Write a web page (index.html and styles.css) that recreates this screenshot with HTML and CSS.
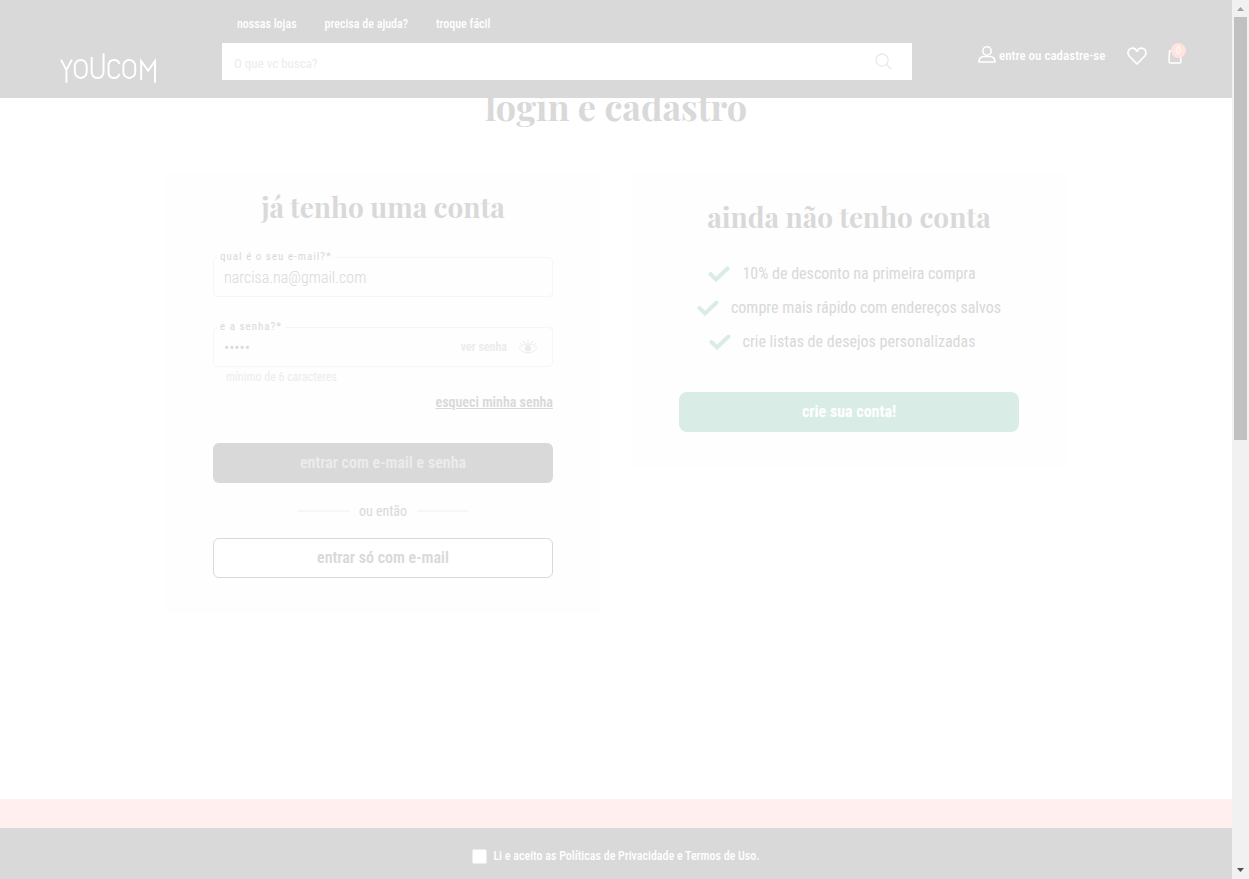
FILE: index.html
```html
<!DOCTYPE html>
<html lang="pt-BR">
<head>
<meta charset="utf-8">
<meta name="viewport" content="width=device-width, initial-scale=1">
<title>login e cadastro | Youcom</title>
<link rel="stylesheet" href="styles.css">
</head>
<body>
<div class="page">
  <header class="header">
    <a class="logo" href="#" aria-label="Youcom">
      <svg width="97" height="32" viewBox="0 0 98 32" fill="none" stroke="currentColor" stroke-width="2">
        <path d="M1 7.500 6.500 18 12 7.500M6.500 17V31"/>
        <rect x="15" y="8" width="12" height="18" rx="6"/>
        <path d="M32 5V19Q32 26 38 26Q44 26 44 19V1"/>
        <path d="M60 12Q59 8 54.500 8Q49 8 49 14V20Q49 26 54.500 26Q59 26 60 22"/>
        <rect x="64" y="8" width="12" height="18" rx="6"/>
        <path d="M82 28V9L89 18.500 96 9V31"/>
      </svg>
    </a>
    <div class="header-center">
      <nav class="top-links">
        <a href="#">nossas lojas</a>
        <a href="#">precisa de ajuda?</a>
        <a href="#">troque fácil</a>
      </nav>
      <form class="search">
        <input type="search" placeholder="O que vc busca?" aria-label="Buscar">
        <button type="submit" aria-label="Buscar">
          <svg width="17" height="17" viewBox="0 0 18 18" fill="none" stroke="currentColor" stroke-width="1.300"><circle cx="7.500" cy="7.500" r="6.500"/><path d="m12.200 12.200 4.800 4.800"/></svg>
        </button>
      </form>
    </div>
    <div class="actions">
      <a class="account" href="#">
        <svg width="18" height="17" viewBox="0 0 18 17" fill="none" stroke="currentColor" stroke-width="1.600"><circle cx="9" cy="5" r="4.200"/><path d="M1 16Q1 10.500 6 10.500H12Q17 10.500 17 16Z" stroke-linejoin="round"/></svg>
        <span>entre ou cadastre-se</span>
      </a>
      <a class="wish" href="#" aria-label="Favoritos">
        <svg width="20" height="18" viewBox="0 0 20 18" fill="none" stroke="currentColor" stroke-width="1.700" stroke-linejoin="round"><path d="M10 17 2.200 9C0 6.400 1 2.600 3.700 1.500 6.200.500 8.800 1.700 10 4.400 11.200 1.700 13.800.500 16.300 1.500 19 2.600 20 6.400 17.800 9Z"/></svg>
      </a>
      <a class="bag" href="#" aria-label="Sacola, 0 itens">
        <svg width="14" height="14" viewBox="0 0 14 14" fill="none" stroke="currentColor" stroke-width="1.500"><path d="M1.500 1H12L13 11.500Q13 13 11.500 13H2.500Q1 13 1 11.500Z"/></svg>
        <span class="badge">0</span>
      </a>
    </div>
  </header>

  <main class="main">
    <h1>login e cadastro</h1>
    <div class="cards">
      <form class="card login">
        <h2>já tenho uma conta</h2>
        <div class="field">
          <label for="email">qual é o seu e-mail?*</label>
          <input id="email" type="email" value="narcisa.na@gmail.com">
        </div>
        <div class="field">
          <label for="senha">e a senha?*</label>
          <input id="senha" type="password" value="senha">
          <button class="reveal" type="button">ver senha
            <svg width="20" height="14" viewBox="0 0 20 14" fill="none" stroke="currentColor"><path d="M.700 8.500Q5 3.500 10 3.500T19.300 8.500Q15 13 10 13T.700 8.500ZM10 3V0M6.500 3.500 5.500 1M13.500 3.500 14.500 1M3.700 5 2 3M16.300 5 18 3"/><circle cx="10" cy="8" r="3" fill="currentColor"/></svg>
          </button>
        </div>
        <p class="hint">mínimo de 6 caracteres</p>
        <a class="forgot" href="#">esqueci minha senha</a>
        <button class="btn btn-dark" type="submit">entrar com e-mail e senha</button>
        <div class="or"><span>ou então</span></div>
        <button class="btn btn-outline" type="button">entrar só com e-mail</button>
      </form>

      <section class="card signup">
        <h2>ainda não tenho conta</h2>
        <ul class="perks">
          <li><svg width="22" height="16" viewBox="0 0 22 16" fill="none" stroke="currentColor" stroke-width="4"><path d="M2.500 8 8 13.500 19.500 2.500" stroke-linecap="round"/></svg>10% de desconto na primeira compra</li>
          <li><svg width="22" height="16" viewBox="0 0 22 16" fill="none" stroke="currentColor" stroke-width="4"><path d="M2.500 8 8 13.500 19.500 2.500" stroke-linecap="round"/></svg>compre mais rápido com endereços salvos</li>
          <li><svg width="22" height="16" viewBox="0 0 22 16" fill="none" stroke="currentColor" stroke-width="4"><path d="M2.500 8 8 13.500 19.500 2.500" stroke-linecap="round"/></svg>crie listas de desejos personalizadas</li>
        </ul>
        <button class="btn btn-green" type="button">crie sua conta!</button>
      </section>
    </div>
  </main>

  <footer class="footer">
    <label><input type="checkbox">Li e aceito as Políticas de Privacidade e Termos de Uso.</label>
  </footer>
</div>
<div class="scrollbar" aria-hidden="true">
  <svg class="arrow-up" width="7" height="4" viewBox="0 0 7 4"><path d="M0 4 3.500 0 7 4Z" fill="currentColor"/></svg>
  <div class="track"><div class="thumb"></div></div>
  <svg width="7" height="4" viewBox="0 0 7 4"><path d="M0 0 3.500 4 7 0Z" fill="currentColor"/></svg>
</div>
</body>
</html>
```

FILE: styles.css
```css
* { box-sizing: border-box; }

body {
  margin: 0;
  min-height: 100vh;
  display: flex;
  background: #fff;
  color: #d9d9d9;
  font-family: "Roboto Condensed", "Liberation Sans Narrow", Roboto, sans-serif;
  font-size: 16px;
}

a { color: inherit; text-decoration: none; }
button, input { font: inherit; color: inherit; }
button { padding: 0; border: 0; background: none; cursor: pointer; }
svg { display: block; flex: none; }

.page { flex: 1; min-width: 0; display: flex; flex-direction: column; }

.header {
  position: relative;
  z-index: 1;
  display: flex;
  height: 98px;
  padding: 0 46px 0 60px;
  background: #d9d9d9;
  color: #fff;
}
.logo { flex: none; width: 162px; padding-top: 52px; }
.header-center { flex: 1; min-width: 0; }
.top-links {
  display: flex;
  gap: 28px;
  height: 43px;
  padding: 16px 15px 0;
  font-size: 12px;
  line-height: 16px;
  font-weight: 500;
}
.search {
  display: flex;
  align-items: center;
  height: 37px;
  padding: 0 20px 0 12px;
  background: #fff;
}
.search input {
  flex: 1;
  min-width: 0;
  padding: 4px 0 0;
  border: 0;
  outline: 0;
  background: none;
  font-size: 13px;
}
.search input::placeholder { color: #ececec; opacity: 1; }
.search button { color: #e8e8e8; }
.actions {
  flex: none;
  display: flex;
  justify-content: space-between;
  width: 208px;
  margin-left: 66px;
  padding-top: 46px;
}
.account {
  display: flex;
  gap: 3px;
  font-size: 13px;
  line-height: 20px;
  font-weight: 500;
}
.wish { padding-top: 1px; }
.bag { position: relative; width: 18px; padding-top: 4px; }
.badge {
  position: absolute;
  top: -3px;
  right: 0;
  width: 15px;
  height: 15px;
  border-radius: 50%;
  background: #ffe3dc;
  font-size: 10px;
  line-height: 15px;
  text-align: center;
}

.main { flex: 1; margin-top: -16px; padding: 0 16px 40px; }
h1, h2 {
  margin: 0;
  font-family: "Playfair Display", "Liberation Serif", serif;
  font-weight: 700;
  text-align: center;
}
h1 { font-size: 36px; line-height: 48px; }
h2 { font-size: 28px; line-height: 40px; }
.cards {
  display: grid;
  grid-template-columns: 1fr 1fr;
  align-items: start;
  gap: 32px;
  max-width: 900px;
  margin: 43px auto 0;
}
.card {
  display: flex;
  flex-direction: column;
  padding: 14px 47px 35px;
  background: #fefefe;
}
.signup { padding-top: 24px; }

.field {
  position: relative;
  display: flex;
  height: 40px;
  margin-top: 30px;
  border: 1px solid #f6f6f6;
  border-radius: 4px;
}
.field label {
  position: absolute;
  top: -9px;
  left: 3px;
  padding: 0 3px;
  background: #fefefe;
  font-size: 11px;
  line-height: 16px;
  letter-spacing: 1px;
}
.field input {
  flex: 1;
  min-width: 0;
  padding: 0 10px;
  border: 0;
  outline: 0;
  background: none;
  font-weight: 300;
}
.reveal {
  display: flex;
  align-items: center;
  gap: 11px;
  padding-right: 14px;
  color: #ececec;
  font-size: 12px;
  font-weight: 600;
}
.hint { margin: 2px 13px 0; color: #ececec; font-size: 12px; line-height: 16px; }
.forgot {
  align-self: flex-end;
  margin-top: 7px;
  font-size: 14px;
  line-height: 20px;
  font-weight: 600;
  text-decoration: underline;
}
.btn { height: 40px; padding-bottom: 2px; border-radius: 6px; font-size: 16px; font-weight: 600; }
.btn-dark { margin-top: 31px; background: #d9d9d9; color: #ececec; }
.btn-outline { border: 1px solid #d9d9d9; background: #fff; }
.btn-green { margin-top: 40px; border-radius: 8px; background: #d9ede6; color: #fff; font-weight: 700; }
.or {
  display: flex;
  align-items: center;
  justify-content: center;
  gap: 10px;
  height: 55px;
  font-size: 14px;
}
.or::before, .or::after { content: ""; width: 51px; height: 2px; background: #f6f6f6; }

.perks {
  display: grid;
  gap: 14px;
  margin: 27px 0 0;
  padding: 0;
  list-style: none;
  line-height: 20px;
}
.perks li { display: flex; align-items: center; justify-content: center; gap: 12px; white-space: nowrap; }
.perks li:nth-child(odd) { padding-right: 14px; }
.perks svg { color: #d9ede6; }

.footer {
  display: flex;
  justify-content: center;
  padding: 18px 0 13px;
  border-top: 29px solid #ffefef;
  background: #d9d9d9;
  color: #fff;
  font-size: 12px;
  line-height: 20px;
  font-weight: 500;
}
.footer label { display: flex; align-items: center; gap: 6px; }
.footer input {
  appearance: none;
  width: 15px;
  height: 15px;
  margin: 0;
  border: 1px solid #ececec;
  border-radius: 2px;
  background: #fff;
}

.scrollbar {
  display: flex;
  flex-direction: column;
  align-items: center;
  width: 17px;
  padding: 7px 0;
  background: #f1f1f1;
  color: #505050;
}
.arrow-up { color: #a3a3a3; }
.track { flex: 1; width: 13px; padding: 6px 0; }
.thumb { height: 50%; background: #c1c1c1; }
```
